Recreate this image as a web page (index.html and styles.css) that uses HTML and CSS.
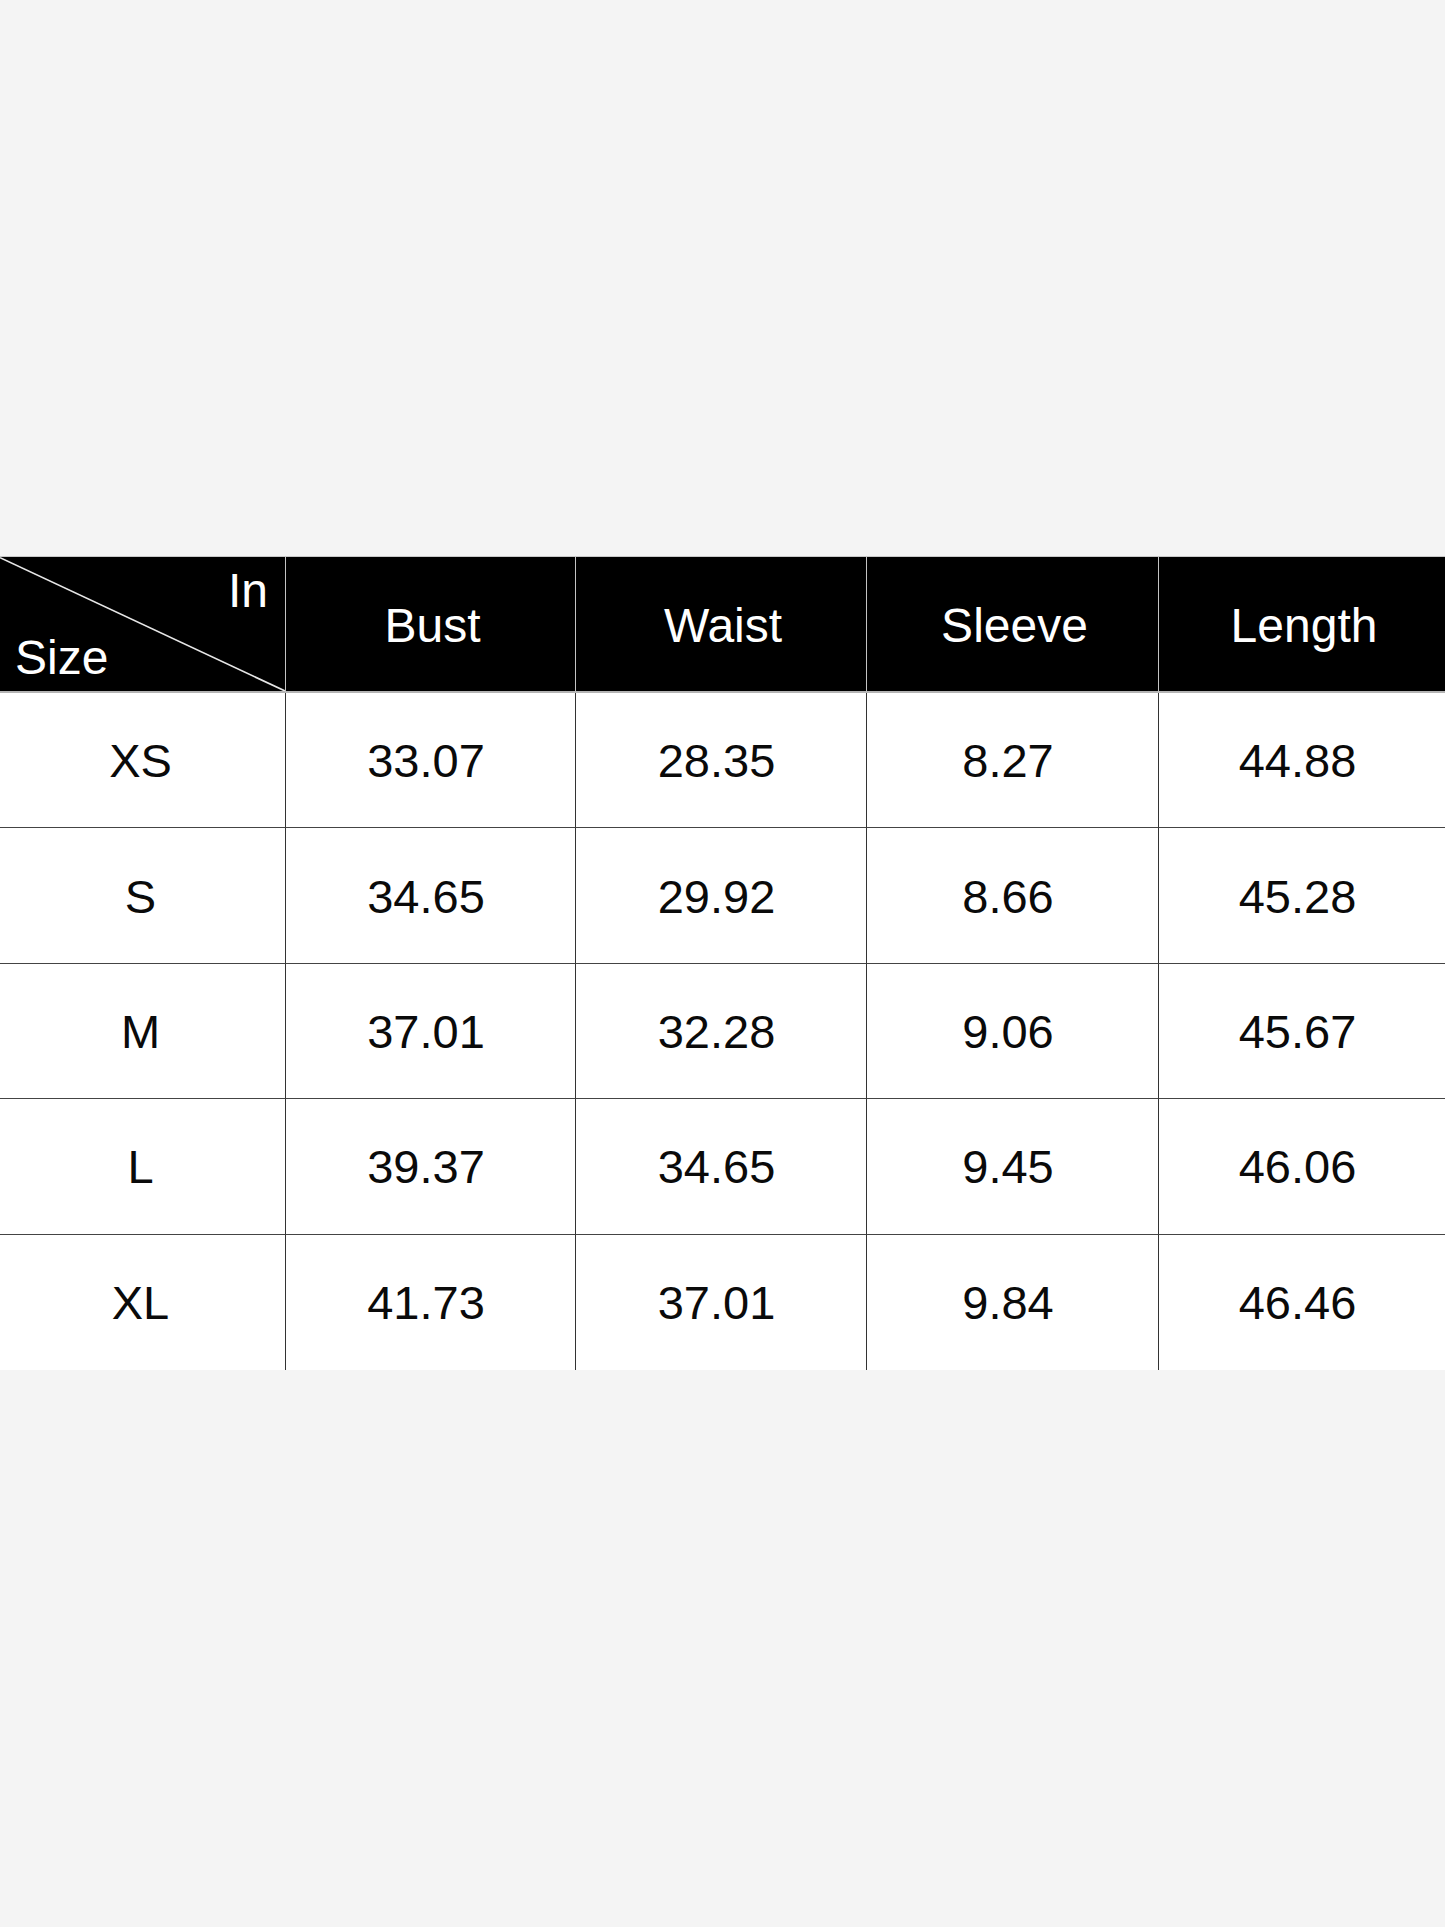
FILE: index.html
```html
<!DOCTYPE html>
<html>
<head>
<meta charset="utf-8">
<link rel="stylesheet" href="styles.css">
</head>
<body>
<div class="page">
  <div class="chart">
    <div class="cell head corner">
      <svg class="diag" viewBox="0 0 100 100" preserveAspectRatio="none"><line x1="0" y1="0.5" x2="100" y2="100" stroke="#e6e6e6" stroke-width="1.6" vector-effect="non-scaling-stroke"/></svg>
      <span class="unit">In</span>
      <span class="size">Size</span>
    </div>
    <div class="cell head">Bust</div>
    <div class="cell head">Waist</div>
    <div class="cell head">Sleeve</div>
    <div class="cell head">Length</div>

    <div class="cell first">XS</div><div class="cell">33.07</div><div class="cell">28.35</div><div class="cell">8.27</div><div class="cell">44.88</div>
    <div class="cell first">S</div><div class="cell">34.65</div><div class="cell">29.92</div><div class="cell">8.66</div><div class="cell">45.28</div>
    <div class="cell first">M</div><div class="cell">37.01</div><div class="cell">32.28</div><div class="cell">9.06</div><div class="cell">45.67</div>
    <div class="cell first">L</div><div class="cell">39.37</div><div class="cell">34.65</div><div class="cell">9.45</div><div class="cell">46.06</div>
    <div class="cell first last">XL</div><div class="cell last">41.73</div><div class="cell last">37.01</div><div class="cell last">9.84</div><div class="cell last">46.46</div>
  </div>
</div>
</body>
</html>
```

FILE: styles.css
```css
html, body {
  margin: 0;
  padding: 0;
  background: #f4f4f4;
}
.page {
  width: 1445px;
  height: 1927px;
  padding-top: 556px;
  box-sizing: border-box;
  font-family: "Liberation Sans", Arial, sans-serif;
}
.chart {
  display: grid;
  grid-template-columns: 285px 290px 291px 292px 1fr;
  grid-template-rows: 136px repeat(5, 135.4px);
  border-top: 1px solid #c8c8c8;
  background: #fff;
}
.cell {
  display: flex;
  align-items: center;
  justify-content: center;
  font-size: 47px;
  color: #0a0a0a;
  border-left: 1px solid #333;
  border-bottom: 1px solid #444;
  box-sizing: border-box;
  padding-right: 9px;
  padding-top: 1px;
}
.cell.first {
  border-left: none;
  padding-right: 4px;
}
.cell.last {
  border-bottom: none;
}
.cell.head {
  background: #000;
  color: #fff;
  font-size: 48px;
  border-left: 1px solid #c4c4c4;
  border-bottom: 2px solid #b4b4b4;
  padding: 2px 0 0 4px;
}
.cell.corner {
  position: relative;
  border-left: none;
  flex-direction: column;
  align-items: stretch;
  justify-content: space-between;
  padding: 10px 17px 9px 15px;
}
.diag {
  position: absolute;
  left: 0;
  top: 0;
  width: 100%;
  height: 100%;
}
.unit, .size {
  position: relative;
  line-height: 48px;
}
.unit {
  align-self: flex-end;
}
.size {
  align-self: flex-start;
}
```
